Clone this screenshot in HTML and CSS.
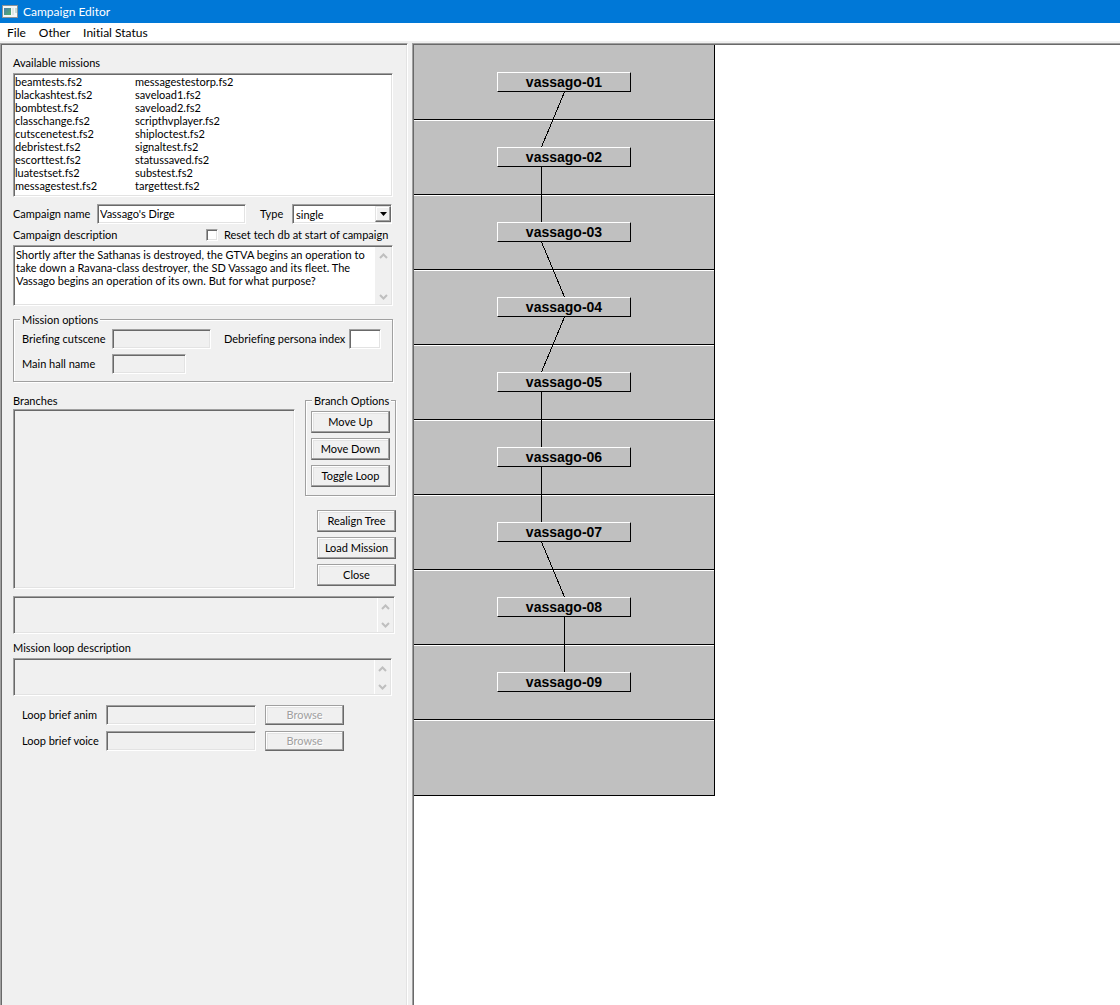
FILE: index.html
```html
<!DOCTYPE html>
<html lang="en">
<head>
<meta charset="utf-8">
<title>Campaign Editor</title>
<link rel="stylesheet" href="styles.css">
</head>
<body>
<div class="window">
  <header class="titlebar">
    <svg class="app-icon" width="16" height="13" viewBox="0 0 16 13" aria-hidden="true">
      <defs><linearGradient id="pane" x1="0" y1="0" x2="1" y2="1"><stop offset="0" stop-color="#4a7fb0"/><stop offset="1" stop-color="#54b068"/></linearGradient></defs>
      <rect width="16" height="13" fill="#8d9296"/>
      <rect x="1" y="1" width="14" height="11" fill="#f4f6f6"/>
      <rect x="2" y="3" width="7" height="7" fill="url(#pane)"/>
      <rect x="10" y="3" width="2" height="7" fill="#dde6e6"/>
      <rect x="13" y="3" width="2" height="5" fill="#c8dcd8"/>
    </svg>
    <h1 class="title">Campaign Editor</h1>
  </header>
  <nav class="menubar">
    <button type="button">File</button>
    <button type="button">Other</button>
    <button type="button">Initial Status</button>
  </nav>

  <main class="panes">
    <form class="panel">
      <h2 class="caption">Available missions</h2>
      <ul class="missions sunken">
        <li>beamtests.fs2</li><li>blackashtest.fs2</li><li>bombtest.fs2</li>
        <li>classchange.fs2</li><li>cutscenetest.fs2</li><li>debristest.fs2</li>
        <li>escorttest.fs2</li><li>luatestset.fs2</li><li>messagestest.fs2</li>
        <li>messagestestorp.fs2</li><li>saveload1.fs2</li><li>saveload2.fs2</li>
        <li>scripthvplayer.fs2</li><li>shiploctest.fs2</li><li>signaltest.fs2</li>
        <li>statussaved.fs2</li><li>substest.fs2</li><li>targettest.fs2</li>
      </ul>

      <div class="name-row">
        <label for="name">Campaign name</label>
        <input class="sunken field" id="name" type="text" value="Vassago's Dirge">
        <label class="type-label" for="type">Type</label>
        <div class="combo sunken">
          <select id="type"><option>single</option><option>multi coop</option><option>multi teams</option></select>
          <span class="combo-arrow"><svg width="7" height="4" viewBox="0 0 7 4" aria-hidden="true"><path d="M0 0h7L3.500 4z"/></svg></span>
        </div>
      </div>

      <div class="desc-row">
        <label for="desc">Campaign description</label>
        <label class="check"><input type="checkbox">Reset tech db at start of campaign</label>
      </div>
      <div class="memo memo-desc sunken">
        <textarea id="desc">Shortly after the Sathanas is destroyed, the GTVA begins an operation to take down a Ravana-class destroyer, the SD Vassago and its fleet. The Vassago begins an operation of its own. But for what purpose?</textarea>
        <div class="scroll">
          <svg width="9" height="6" viewBox="0 0 9 6" aria-hidden="true"><path d="M1 5l3.500-3.500L8 5"/></svg>
          <svg width="9" height="6" viewBox="0 0 9 6" aria-hidden="true"><path d="M1 1l3.500 3.500L8 1"/></svg>
        </div>
      </div>

      <fieldset class="group options">
        <legend>Mission options</legend>
        <label for="cutscene">Briefing cutscene</label>
        <div class="option-cell">
          <input class="sunken field wide" id="cutscene" type="text" disabled>
          <label for="persona">Debriefing persona index</label>
          <input class="sunken field short" id="persona" type="text">
        </div>
        <label for="hall">Main hall name</label>
        <input class="sunken field medium" id="hall" type="text" disabled>
      </fieldset>

      <div class="branches">
        <section class="branch-list">
          <h2 class="caption">Branches</h2>
          <div class="tree-box sunken"></div>
        </section>
        <div class="actions">
          <fieldset class="group branch-options">
            <legend>Branch Options</legend>
            <button class="push" type="button">Move Up</button>
            <button class="push" type="button">Move Down</button>
            <button class="push" type="button">Toggle Loop</button>
          </fieldset>
          <button class="push" type="button">Realign Tree</button>
          <button class="push" type="button">Load Mission</button>
          <button class="push" type="button">Close</button>
        </div>
      </div>

      <div class="memo memo-branch sunken off">
        <textarea aria-label="Branch description" disabled></textarea>
        <div class="scroll">
          <svg width="9" height="6" viewBox="0 0 9 6" aria-hidden="true"><path d="M1 5l3.500-3.500L8 5"/></svg>
          <svg width="9" height="6" viewBox="0 0 9 6" aria-hidden="true"><path d="M1 1l3.500 3.500L8 1"/></svg>
        </div>
      </div>
      <label class="caption loop-caption" for="loop">Mission loop description</label>
      <div class="memo memo-loop sunken off">
        <textarea id="loop" disabled></textarea>
        <div class="scroll">
          <svg width="9" height="6" viewBox="0 0 9 6" aria-hidden="true"><path d="M1 5l3.500-3.500L8 5"/></svg>
          <svg width="9" height="6" viewBox="0 0 9 6" aria-hidden="true"><path d="M1 1l3.500 3.500L8 1"/></svg>
        </div>
      </div>

      <div class="loop-files">
        <label for="anim">Loop brief anim</label>
        <input class="sunken field" id="anim" type="text" disabled>
        <button class="push" type="button" disabled>Browse</button>
        <label for="voice">Loop brief voice</label>
        <input class="sunken field" id="voice" type="text" disabled>
        <button class="push" type="button" disabled>Browse</button>
      </div>
    </form>

    <section class="canvas">
      <div class="tree">
        <div class="level"><span class="node">vassago-01</span></div>
        <div class="level"><span class="node">vassago-02</span></div>
        <div class="level"><span class="node">vassago-03</span></div>
        <div class="level"><span class="node">vassago-04</span></div>
        <div class="level"><span class="node">vassago-05</span></div>
        <div class="level"><span class="node">vassago-06</span></div>
        <div class="level"><span class="node">vassago-07</span></div>
        <div class="level"><span class="node">vassago-08</span></div>
        <div class="level"><span class="node">vassago-09</span></div>
        <div class="level"></div>
        <svg class="links" width="300" height="750" viewBox="0 0 300 750" aria-hidden="true">
          <path d="M150.500 47L127.500 102M127.500 122V177M127.500 197L150.500 252M150.500 272L127.500 327M127.500 347V402M127.500 422V477M127.500 497L150.500 552M150.500 572V627"/>
        </svg>
      </div>
    </section>
  </main>
</div>
</body>
</html>
```
FILE: styles.css
```css
* { box-sizing: border-box; }

body {
  margin: 0;
  background: #f0f0f0;
  color: #000;
  font: 11px/13px Lato, "Liberation Sans", Arial, sans-serif;
  font-variant-ligatures: none;
}

h1, h2, ul, fieldset { margin: 0; padding: 0; font: inherit; }
ul { list-style: none; }
input, select, textarea, button { margin: 0; font: inherit; color: inherit; }
label, legend, button { white-space: nowrap; }

.window { display: flex; flex-direction: column; min-height: 100vh; }

/* Title bar and menu */
.titlebar {
  display: flex;
  align-items: center;
  gap: 5px;
  height: 23px;
  padding-left: 2px;
  background: #0078d7;
  color: #fff;
}
.title { font-size: 12px; line-height: 16px; }
.menubar {
  display: flex;
  gap: 13px;
  height: 18px;
  padding: 0 7px;
  background: #fff;
}
.menubar button {
  padding: 0;
  border: 0;
  background: none;
  font-size: 12px;
  line-height: 20px;
}

/* Two panes with sunken edges */
.panes { display: flex; flex: 1; gap: 4px; padding-top: 2px; }
.panel {
  flex: none;
  width: 408px;
  padding: 12px;
  border: 1px solid #a0a0a0;
  border-right-color: #fff;
  border-bottom: 0;
  box-shadow: inset 1px 1px 0 #696969, inset -1px 0 0 #e3e3e3;
}
.canvas {
  flex: 1;
  padding: 1px 0 0 1px;
  border: solid #a0a0a0;
  border-width: 1px 0 0 1px;
  background: #fff;
  box-shadow: inset 1px 1px 0 #696969;
}

/* Shared control styles */
.sunken {
  border: 1px solid;
  border-color: #a0a0a0 #fff #fff #a0a0a0;
  border-radius: 0;
  background: #fff;
  box-shadow: inset 1px 1px 0 #696969, inset -1px -1px 0 #e3e3e3;
}
.field { width: 100%; height: 20px; padding: 1px 2px 2px; }
.field:disabled, .off { background: #f0f0f0; }
.push {
  width: 79px;
  height: 22px;
  padding: 0 0 2px;
  border: 1px solid;
  border-color: #a0a0a0 #696969 #696969 #a0a0a0;
  border-radius: 0;
  background: #f0f0f0;
  box-shadow: inset -1px -1px 0 #a0a0a0, inset 1px 1px 0 #fff, inset 2px 2px 0 #e3e3e3;
}
.push:disabled { color: #a0a0a0; text-shadow: 1px 1px 0 #fff; }
.group {
  min-width: 0;
  border: 1px solid #a0a0a0;
  box-shadow: 1px 1px 0 #fff, inset 1px 1px 0 #fff;
}
.group legend { margin-left: 6px; padding: 0 2px; background: #f0f0f0; }
.caption { display: block; }

.missions {
  display: grid;
  grid-template-rows: repeat(9, 13px);
  grid-auto-columns: 120px;
  grid-auto-flow: column;
  width: 380px;
  height: 124px;
  margin-top: 4px;
  padding: 1px;
}

.name-row {
  display: grid;
  grid-template-columns: 84px 149px 46px 100px;
  align-items: center;
  width: 380px;
  margin-top: 7px;
}
.name-row label, .options label, .loop-files label { padding-bottom: 2px; }
.name-row .type-label { padding-left: 14px; }
.combo { position: relative; height: 20px; padding: 1px; }
.combo select {
  appearance: none;
  width: 100%;
  height: 16px;
  padding: 0 2px;
  border: 0;
  background: none;
}
.combo-arrow {
  position: absolute;
  top: 1px;
  right: 0;
  display: grid;
  place-items: center;
  width: 16px;
  height: 16px;
  border: 1px solid;
  border-color: #e3e3e3 #696969 #696969 #e3e3e3;
  background: #f0f0f0;
  box-shadow: inset -1px -1px 0 #a0a0a0, inset 1px 1px 0 #fff;
  pointer-events: none;
}

.desc-row {
  display: grid;
  grid-template-columns: 193px 1fr;
  align-items: center;
  margin-top: 4px;
}
.check { display: flex; align-items: center; gap: 6px; }
.check input {
  appearance: none;
  width: 12px;
  height: 12px;
  border: 1px solid;
  border-color: #a0a0a0 #fff #fff #a0a0a0;
  background: #fff;
  box-shadow: inset 1px 1px 0 #696969, inset -1px -1px 0 #e3e3e3;
}

.memo { display: flex; padding: 1px; }
.memo textarea {
  flex: 1;
  min-width: 0;
  height: 100%;
  padding: 1px;
  border: 0;
  background: none;
  resize: none;
  overflow: hidden;
}
.scroll {
  display: flex;
  flex-direction: column;
  justify-content: space-between;
  align-items: center;
  width: 16px;
  padding: 6px 0 4px;
  background: #f0f0f0;
}
.scroll svg { fill: none; stroke: #bfbfbf; stroke-width: 2; }
.off .scroll { border-left: 1px solid #fff; }
.memo-desc { width: 380px; height: 61px; margin-top: 4px; }
.memo-branch { width: 382px; height: 38px; margin-top: 7px; }
.memo-loop { width: 379px; height: 38px; margin-top: 4px; }
.loop-caption { margin-top: 7px; }

.options {
  display: grid;
  grid-template-columns: 90px 1fr;
  align-items: center;
  row-gap: 5px;
  width: 380px;
  margin-top: 7px;
  padding: 3px 8px 7px;
}
.options legend { margin-left: -2px; }
.option-cell { display: grid; grid-template-columns: 112px 125px 32px; align-items: center; }
.wide { width: 99px; }
.medium { width: 74px; }

.branches { display: flex; justify-content: space-between; width: 383px; margin-top: 12px; }
.branch-list { width: 282px; }
.tree-box { height: 180px; margin-top: 2px; background: #f0f0f0; }
.actions { display: flex; flex-direction: column; align-items: flex-end; gap: 5px; width: 91px; }
.branch-options {
  display: flex;
  flex-direction: column;
  gap: 5px;
  width: 100%;
  margin-bottom: 9px;
  padding: 4px 5px 8px;
}
.branch-options legend { margin-left: 1px; }

.loop-files {
  display: grid;
  grid-template-columns: 84px 150px 79px;
  gap: 6px 0;
  align-items: center;
  margin-top: 9px;
  padding-left: 9px;
}
.loop-files .push { height: 20px; margin-left: 9px; }

/* Mission tree */
.tree {
  position: relative;
  width: 301px;
  border: solid #000;
  border-width: 0 1px 1px 0;
  background: #c0c0c0;
}
.level {
  display: flex;
  justify-content: center;
  height: 75px;
  padding-top: 26px;
  border: solid;
  border-width: 1px 0;
  border-color: #fff transparent #000;
}
.level:first-child { border-top-color: transparent; }
.level:nth-child(10) { border-bottom-color: transparent; }
.node {
  width: 134px;
  height: 20px;
  border: 1px solid;
  border-color: #fff #000 #000 #fff;
  font: bold 14px/19px "Liberation Sans", Arial, sans-serif;
  text-align: center;
}
.links {
  position: absolute;
  top: 0;
  left: 0;
  fill: none;
  stroke: #000;
  shape-rendering: crispEdges;
}
```
